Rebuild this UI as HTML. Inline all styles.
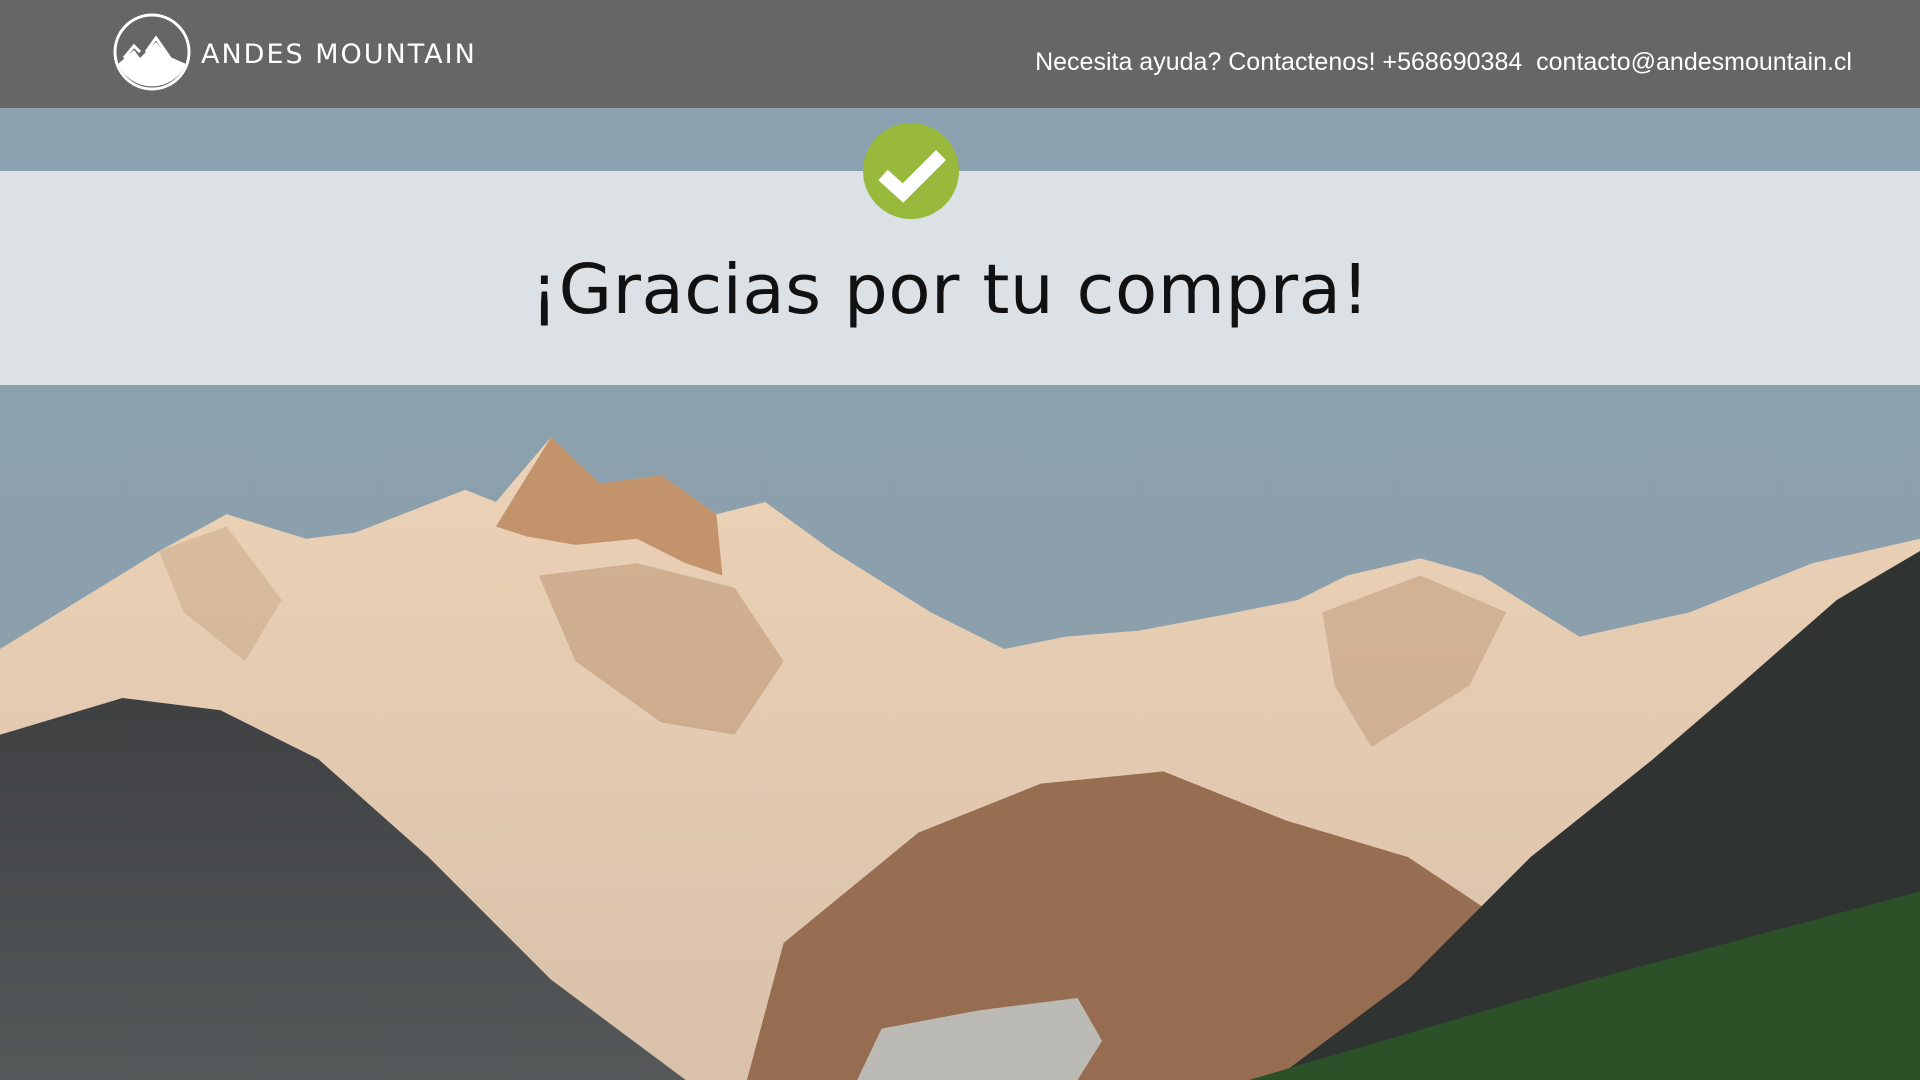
<!DOCTYPE html>
<html><head><meta charset="utf-8"><style>
*{margin:0;padding:0;box-sizing:border-box}
body{width:1920px;height:1080px;overflow:hidden;position:relative;background:#8ba1af;font-family:"Liberation Sans",sans-serif}
#bg{position:absolute;left:0;top:0;width:1920px;height:1080px}
header{position:absolute;left:0;top:0;width:1920px;height:108px;background:#666666}
.logo{position:absolute;left:112px;top:12px}
.brand{position:absolute;left:201px;top:39px;color:#fff;font-size:27px;letter-spacing:2px;font-family:"DejaVu Sans",sans-serif}
.contact{position:absolute;right:68px;top:48px;color:#fff;font-size:25px;white-space:nowrap}
.card{position:absolute;left:-12px;top:171px;width:1946px;height:214px;background:#dce1e5;border-radius:12px}
.check{position:absolute;left:863px;top:123px}
h1{position:absolute;left:0;width:1900px;top:250px;text-align:center;font-weight:normal;font-size:69px;color:#111;letter-spacing:0.5px;font-family:"DejaVu Sans","Liberation Sans",sans-serif}
</style></head><body>
<svg id="bg" viewBox="0 0 1568 882" preserveAspectRatio="none">
<defs>
<linearGradient id="sky" x1="0" y1="0" x2="0" y2="1"><stop offset="0" stop-color="#8ca1b0"/><stop offset="1" stop-color="#8aa0a8"/></linearGradient>
<linearGradient id="snow" x1="0" y1="0" x2="0" y2="1"><stop offset="0" stop-color="#ecd2b6"/><stop offset="1" stop-color="#d9c1aa"/></linearGradient>
<linearGradient id="lf" x1="0" y1="0" x2="0" y2="1"><stop offset="0" stop-color="#3e4042"/><stop offset="1" stop-color="#55595a"/></linearGradient>
</defs>
<rect width="1568" height="882" fill="url(#sky)"/>
<polygon fill="url(#snow)" points="0,530 130,450 185,420 250,440 290,435 380,400 405,410 450,357 490,395 540,388 585,420 625,410 680,450 760,500 820,530 870,520 930,515 1010,500 1060,490 1100,470 1160,456 1210,470 1290,520 1380,500 1480,460 1568,440 1568,882 0,882"/>
<polygon fill="#b9845a" opacity=".8" points="405,430 450,357 490,395 540,388 585,420 590,470 560,460 520,440 470,445 430,438"/>
<polygon fill="#b48a66" opacity=".45" points="440,470 520,460 600,480 640,540 600,600 540,590 470,540"/>
<polygon fill="#b48a66" opacity=".4" points="1080,500 1160,470 1230,500 1200,560 1120,610 1090,560"/>
<polygon fill="#b48a66" opacity=".3" points="130,450 185,430 230,490 200,540 150,500"/>
<polygon fill="url(#lf)" points="0,600 100,570 180,580 260,620 350,700 450,800 560,882 0,882"/>
<polygon fill="#8f6447" opacity=".9" points="610,882 640,770 750,680 850,640 950,630 1050,670 1150,700 1210,740 1160,882"/>
<polygon fill="#c5cdce" opacity=".8" points="700,882 720,840 800,825 880,815 900,850 880,882"/>
<polygon fill="#2f3432" points="1040,882 1150,800 1250,700 1350,620 1420,560 1500,490 1568,450 1568,882"/>
<polygon fill="#2c5128" points="1020,882 1300,800 1568,728 1568,882"/>
</svg>
<header>
<svg class="logo" width="82" height="82" viewBox="0 0 82 82">
<circle cx="40" cy="40" r="37" fill="none" stroke="#fff" stroke-width="3"/>
<path d="M6 52 L22 38 L28 46 L44 30 L56 44 L74 52 A37 37 0 0 1 6 52 Z" fill="#fff"/>
<path d="M12 46 L22 34 L28 40 M34 40 L44 26 L58 46" fill="none" stroke="#fff" stroke-width="3"/>
</svg>
<div class="brand">ANDES MOUNTAIN</div>
<div class="contact">Necesita ayuda? Contactenos! +568690384&nbsp; contacto@andesmountain.cl</div>
</header>
<div class="card"></div>
<svg class="check" width="96" height="96" viewBox="0 0 96 96">
<circle cx="48" cy="48" r="48" fill="#99b93c"/>
<path d="M20 52 L40 70 L78 32" fill="none" stroke="#fff" stroke-width="14" stroke-linejoin="miter"/>
</svg>
<h1>¡Gracias por tu compra!</h1>
</body></html>
